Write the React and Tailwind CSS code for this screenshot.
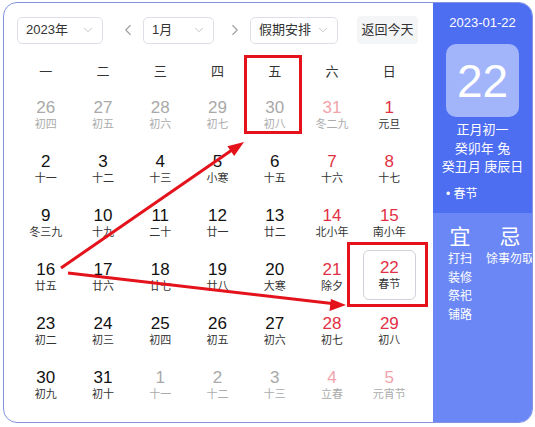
import React from "react";
import { ChevronDown, ChevronLeft, ChevronRight } from "lucide-react";

const FONT = { fontFamily: '"Liberation Sans", "Noto Sans CJK SC", sans-serif' };

const WEEK = ["一", "二", "三", "四", "五", "六", "日"];

// n: day, l: lunar text, t: kind of cell
const ROWS = [
  [
    { n: 26, l: "初四", t: "prev" },
    { n: 27, l: "初五", t: "prev" },
    { n: 28, l: "初六", t: "prev" },
    { n: 29, l: "初七", t: "prev" },
    { n: 30, l: "初八", t: "prev" },
    { n: 31, l: "冬二九", t: "prevRed" },
    { n: 1, l: "元旦", t: "red" },
  ],
  [
    { n: 2, l: "十一" },
    { n: 3, l: "十二" },
    { n: 4, l: "十三" },
    { n: 5, l: "小寒" },
    { n: 6, l: "十五" },
    { n: 7, l: "十六", t: "red" },
    { n: 8, l: "十七", t: "red" },
  ],
  [
    { n: 9, l: "冬三九" },
    { n: 10, l: "十九" },
    { n: 11, l: "二十" },
    { n: 12, l: "廿一" },
    { n: 13, l: "廿二" },
    { n: 14, l: "北小年", t: "red" },
    { n: 15, l: "南小年", t: "red" },
  ],
  [
    { n: 16, l: "廿五" },
    { n: 17, l: "廿六" },
    { n: 18, l: "廿七" },
    { n: 19, l: "廿八" },
    { n: 20, l: "大寒" },
    { n: 21, l: "除夕", t: "red" },
    { n: 22, l: "春节", t: "red", selected: true },
  ],
  [
    { n: 23, l: "初二" },
    { n: 24, l: "初三" },
    { n: 25, l: "初四" },
    { n: 26, l: "初五" },
    { n: 27, l: "初六" },
    { n: 28, l: "初七", t: "red" },
    { n: 29, l: "初八", t: "red" },
  ],
  [
    { n: 30, l: "初九" },
    { n: 31, l: "初十" },
    { n: 1, l: "十一", t: "prev" },
    { n: 2, l: "十二", t: "prev" },
    { n: 3, l: "十三", t: "prev" },
    { n: 4, l: "立春", t: "prevRed" },
    { n: 5, l: "元宵节", t: "prevRed" },
  ],
];

const numColor = (t) => {
  if (t === "prev") return "text-[#a9a9a9]";
  if (t === "prevRed") return "text-[#f0a3ab]";
  if (t === "red") return "text-[#e23145]";
  return "text-[#111]";
};

const lunarColor = (t) => {
  if (t === "prev" || t === "prevRed") return "text-[#ababab]";
  return "text-[#333]";
};

const Select = ({ label, width }) => (
  <div
    className={`flex items-center justify-between h-[27px] ${width} border border-[#dcdfe6] rounded-[5px] pl-[8px] pr-[7px] text-[13px] text-[#333]`}
  >
    <span>{label}</span>
    <ChevronDown className="w-[14px] h-[14px] text-[#b8bcc4]" strokeWidth={1.5} />
  </div>
);

const DayCell = ({ cell }) => {
  const inner = (
    <>
      <div className={`text-[17px] leading-[18px] ${numColor(cell.t)}`}>{cell.n}</div>
      <div className={`text-[11px] leading-[14px] ${lunarColor(cell.t)}`}>{cell.l}</div>
    </>
  );
  if (cell.selected) {
    return (
      <div className="h-[54px] flex justify-center">
        <div className="w-[53px] h-[50px] border border-[#cfd2d8] rounded-[6px] flex flex-col items-center justify-center">
          {inner}
        </div>
      </div>
    );
  }
  return <div className="h-[54px] flex flex-col items-center justify-center">{inner}</div>;
};

export default function App() {
  return (
    <div className="relative w-[535px] h-[427px] bg-white pt-[2px] pl-[3px]" style={FONT}>
      <div className="flex w-[530px] h-[421px] border border-[#8393e2] rounded-[14px] overflow-hidden">
        {/* calendar body */}
        <div className="w-[429px] pl-[13px] pt-[13px]">
          <div className="flex items-center h-[28px]">
            <Select label="2023年" width="w-[86px]" />
            <ChevronLeft className="w-[18px] h-[18px] ml-[16px] mr-[6px] text-[#a0a0a0]" strokeWidth={1.5} />
            <Select label="1月" width="w-[71px]" />
            <ChevronRight className="w-[18px] h-[18px] ml-[12px] mr-[6px] text-[#a0a0a0]" strokeWidth={1.5} />
            <Select label="假期安排" width="w-[88px]" />
            <div className="ml-[19px] h-[28px] w-[61px] rounded-[4px] bg-[#f4f5f7] flex items-center justify-center text-[13px] text-[#333]">
              返回今天
            </div>
          </div>
          <div className="w-[401px] mt-[12px]">
            <div className="grid grid-cols-7 h-[32px] items-center">
              {WEEK.map((w) => (
                <div key={w} className="text-center text-[13px] text-[#333]">
                  {w}
                </div>
              ))}
            </div>
            {ROWS.map((row, i) => (
              <div key={i} className="grid grid-cols-7">
                {row.map((c, j) => (
                  <DayCell key={j} cell={c} />
                ))}
              </div>
            ))}
          </div>
        </div>

        {/* side panel */}
        <div className="flex-1 flex flex-col text-white">
          <div className="h-[210px] bg-[#4e6ef2] flex flex-col items-center pt-[11px]">
            <div className="text-[13px] leading-[18px]">2023-01-22</div>
            <div className="mt-[12px] w-[73px] h-[73px] rounded-[10px] bg-[#a2b4fa] flex items-center justify-center text-[46px] font-light leading-none">
              22
            </div>
            <div className="mt-[4px] text-[13px] leading-[18.5px] text-center">
              <div>正月初一</div>
              <div>癸卯年 兔</div>
              <div>癸丑月 庚辰日</div>
            </div>
            <div className="self-start pl-[13px] mt-[9px] text-[12px] leading-[16px]">• 春节</div>
          </div>
          <div className="flex-1 bg-[#6b87f5] flex pl-[14px] pt-[11px] gap-[15px]">
            <div className="w-[26px] flex flex-col items-center">
              <div className="text-[21px] leading-[26px]">宜</div>
              <div className="text-[12px] leading-[18.5px] text-center">
                <div>打扫</div>
                <div>装修</div>
                <div>祭祀</div>
                <div>铺路</div>
              </div>
            </div>
            <div className="w-[44px] flex flex-col items-center">
              <div className="text-[21px] leading-[26px]">忌</div>
              <div className="text-[12px] leading-[18.5px] whitespace-nowrap">馀事勿取</div>
            </div>
          </div>
        </div>
      </div>

      {/* annotation overlay */}
      <svg className="absolute top-0 left-0 pointer-events-none" width="535" height="427">
        <rect x="245.5" y="56.5" width="55" height="76" fill="none" stroke="#e3121b" strokeWidth="3" />
        <rect x="348.5" y="243.5" width="78" height="62" fill="none" stroke="#e3121b" strokeWidth="3" />
        <line x1="61" y1="268" x2="232" y2="150" stroke="#e3121b" strokeWidth="3" />
        <polygon points="244,142 234.2,156 227.4,146.2" fill="#e3121b" />
        <line x1="68" y1="273" x2="332" y2="303.5" stroke="#e3121b" strokeWidth="3" />
        <polygon points="346,305 329.5,311 330.9,299" fill="#e3121b" />
      </svg>
    </div>
  );
}
